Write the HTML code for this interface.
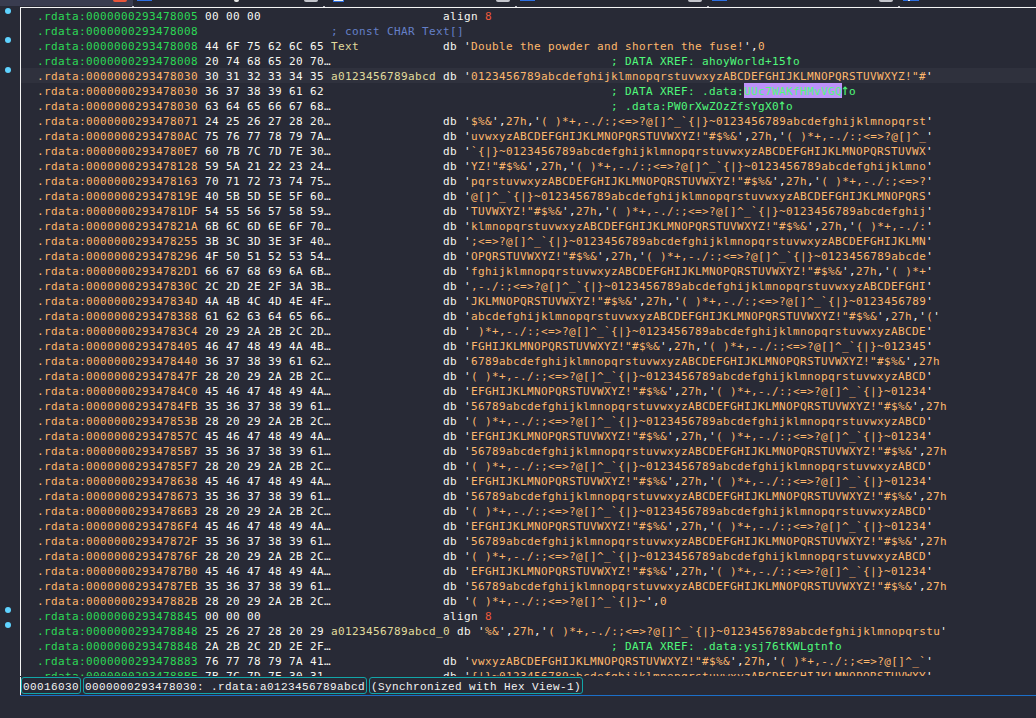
<!DOCTYPE html>
<html><head><meta charset="utf-8"><title>IDA View-A</title>
<style>
html,body{margin:0;padding:0;background:#282a36;overflow:hidden}
body{width:1036px;height:718px;position:relative;font-family:"DejaVu Sans Mono","Liberation Mono",monospace}
#tabs{position:absolute;left:0;top:0;width:1036px;height:6px;background:#252732;overflow:hidden}
#tabs .act{position:absolute;left:0;top:0;width:133px;height:6px;background:#393c4f}
#tabs span{position:absolute;top:0;display:block}
#gutter{position:absolute;left:0;top:7px;width:20px;height:688px;background:#282a36}
.dot{position:absolute;left:5px;width:6px;height:6px;margin-top:-8px;border-radius:50%;background:#5fd3ff}
#view{position:absolute;left:20px;top:7px;width:1016px;height:669px;border-left:1px solid #f4f4f4;border-top:1px solid #f4f4f4;box-sizing:border-box;overflow:hidden}
#code{position:absolute;left:0;top:0;width:1015px}
.r{height:15px;line-height:17px;white-space:pre;font-size:11px;color:#f8f8f2;padding-left:16px;letter-spacing:0.378px}
.r.cur{background:#2f313d}
.g{color:#2cd855}.o{color:#ffb469}
.r i{font-style:normal;color:#ffb86c}
.r b{font-weight:normal;color:#f0583a}
.r u{text-decoration:none;color:#6580c8}
.r s{text-decoration:none;color:#50fa7b}
.r em{font-style:normal;color:#e2dc9c}
.r mark{background:#bd93f9;color:#50fa7b;display:inline-block;height:15px;line-height:17px;vertical-align:top}
#status{position:absolute;left:0;top:677px;width:1036px;height:17px;font-family:"Liberation Mono","DejaVu Sans Mono",monospace;font-size:11px;letter-spacing:0.4px;color:#f4f4f4}
#status .cell{position:absolute;top:0;height:17px;line-height:18px;border:1px solid #12a5a8;border-radius:3px;white-space:pre;text-align:center;box-sizing:border-box}
#blueline{position:absolute;left:20px;top:695px;width:1016px;height:1px;background:#1c6fc9}
#vline{position:absolute;left:20px;top:677px;width:1px;height:18px;background:#f4f4f4}
.bump{position:absolute;top:6px;width:2px;height:1px;background:#b9bac2}
.up{display:inline-block;transform:scale(1.25,1.45);transform-origin:50% 12.3px}

</style></head><body>
<div id="tabs"><div class="act"></div>
<span style="left:113px;width:14px;height:2px;background:#e8553a;border-radius:0 0 3px 3px"></span>
<span style="left:137px;width:15px;height:1px;background:#2f6fe0"></span>
<span style="left:234px;width:5px;height:2px;background:#e8e8e8;border-radius:0 0 2px 2px"></span>
<span style="left:304px;width:14px;height:2px;background:#c4c5cc;border-radius:0 0 3px 3px"></span>
<span style="left:333px;width:11px;height:2px;background:#f2f2f2;border:1px solid #2f6fe0;border-top:0;box-sizing:border-box"></span>
<span style="left:496px;width:14px;height:2px;background:#c4c5cc;border-radius:0 0 3px 3px"></span>
<span style="left:520px;width:15px;height:1px;background:#2f6fe0"></span>
<span style="left:688px;width:14px;height:2px;background:#c4c5cc;border-radius:0 0 3px 3px"></span>
<span style="left:712px;width:15px;height:1px;background:#2f6fe0"></span>
<span style="left:879px;width:14px;height:2px;background:#c4c5cc;border-radius:0 0 3px 3px"></span>
<span style="left:903px;width:16px;height:1px;background:#2f6fe0"></span><span style="left:908px;width:2px;height:1px;background:#e8eefc"></span>
</div>
<span class="bump" style="left:132px"></span><span class="bump" style="left:323px"></span><span class="bump" style="left:515px"></span><span class="bump" style="left:707px"></span><span class="bump" style="left:898px"></span>

<div id="gutter"><span class="dot" style="top:9px"></span><span class="dot" style="top:38px"></span><span class="dot" style="top:68px"></span><span class="dot" style="top:608px"></span><span class="dot" style="top:623px"></span></div>
<div id="view"><div id="code">
<div class="r "><span class="g">.rdata:0000000293478005</span> 00 00 00                          align <b>8</b></div>
<div class="r "><span class="g">.rdata:0000000293478008</span>                   <u>; const CHAR Text[]</u></div>
<div class="r "><span class="g">.rdata:0000000293478008</span> 44 6F 75 62 6C 65 <em>Text</em>            db '<i>Double the powder and shorten the fuse!</i>',<i>0</i></div>
<div class="r "><span class="g">.rdata:0000000293478008</span> 20 74 68 65 20 70…                                        <s>; DATA XREF: ahoyWorld+15<span class=up>↑</span>o</s></div>
<div class="r cur"><span class="o">.rdata:0000000293478030</span> 30 31 32 33 34 35 <em>a0123456789abcd</em> db '<i>0123456789abcdefghijklmnopqrstuvwxyzABCDEFGHIJKLMNOPQRSTUVWXYZ!"#</i>'</div>
<div class="r "><span class="o">.rdata:0000000293478030</span> 36 37 38 39 61 62                                         <s>; DATA XREF: .data:<mark>UUc7WAKfHMvVGQ</mark><span class=up>↑</span>o</s></div>
<div class="r "><span class="o">.rdata:0000000293478030</span> 63 64 65 66 67 68…                                        <s>; .data:PW0rXwZOzZfsYgX0<span class=up>↑</span>o</s></div>
<div class="r "><span class="o">.rdata:0000000293478071</span> 24 25 26 27 28 20…                db '<i>$%&amp;</i>',<i>27h</i>,'<i>( )*+,-./:;&lt;=&gt;?@[]^_`{|}~0123456789abcdefghijklmnopqrst</i>'</div>
<div class="r "><span class="o">.rdata:00000002934780AC</span> 75 76 77 78 79 7A…                db '<i>uvwxyzABCDEFGHIJKLMNOPQRSTUVWXYZ!"#$%&amp;</i>',<i>27h</i>,'<i>( )*+,-./:;&lt;=&gt;?@[]^_</i>'</div>
<div class="r "><span class="o">.rdata:00000002934780E7</span> 60 7B 7C 7D 7E 30…                db '<i>`{|}~0123456789abcdefghijklmnopqrstuvwxyzABCDEFGHIJKLMNOPQRSTUVWX</i>'</div>
<div class="r "><span class="o">.rdata:0000000293478128</span> 59 5A 21 22 23 24…                db '<i>YZ!"#$%&amp;</i>',<i>27h</i>,'<i>( )*+,-./:;&lt;=&gt;?@[]^_`{|}~0123456789abcdefghijklmno</i>'</div>
<div class="r "><span class="o">.rdata:0000000293478163</span> 70 71 72 73 74 75…                db '<i>pqrstuvwxyzABCDEFGHIJKLMNOPQRSTUVWXYZ!"#$%&amp;</i>',<i>27h</i>,'<i>( )*+,-./:;&lt;=&gt;?</i>'</div>
<div class="r "><span class="o">.rdata:000000029347819E</span> 40 5B 5D 5E 5F 60…                db '<i>@[]^_`{|}~0123456789abcdefghijklmnopqrstuvwxyzABCDEFGHIJKLMNOPQRS</i>'</div>
<div class="r "><span class="o">.rdata:00000002934781DF</span> 54 55 56 57 58 59…                db '<i>TUVWXYZ!"#$%&amp;</i>',<i>27h</i>,'<i>( )*+,-./:;&lt;=&gt;?@[]^_`{|}~0123456789abcdefghij</i>'</div>
<div class="r "><span class="o">.rdata:000000029347821A</span> 6B 6C 6D 6E 6F 70…                db '<i>klmnopqrstuvwxyzABCDEFGHIJKLMNOPQRSTUVWXYZ!"#$%&amp;</i>',<i>27h</i>,'<i>( )*+,-./:</i>'</div>
<div class="r "><span class="o">.rdata:0000000293478255</span> 3B 3C 3D 3E 3F 40…                db '<i>;&lt;=&gt;?@[]^_`{|}~0123456789abcdefghijklmnopqrstuvwxyzABCDEFGHIJKLMN</i>'</div>
<div class="r "><span class="o">.rdata:0000000293478296</span> 4F 50 51 52 53 54…                db '<i>OPQRSTUVWXYZ!"#$%&amp;</i>',<i>27h</i>,'<i>( )*+,-./:;&lt;=&gt;?@[]^_`{|}~0123456789abcde</i>'</div>
<div class="r "><span class="o">.rdata:00000002934782D1</span> 66 67 68 69 6A 6B…                db '<i>fghijklmnopqrstuvwxyzABCDEFGHIJKLMNOPQRSTUVWXYZ!"#$%&amp;</i>',<i>27h</i>,'<i>( )*+</i>'</div>
<div class="r "><span class="o">.rdata:000000029347830C</span> 2C 2D 2E 2F 3A 3B…                db '<i>,-./:;&lt;=&gt;?@[]^_`{|}~0123456789abcdefghijklmnopqrstuvwxyzABCDEFGHI</i>'</div>
<div class="r "><span class="o">.rdata:000000029347834D</span> 4A 4B 4C 4D 4E 4F…                db '<i>JKLMNOPQRSTUVWXYZ!"#$%&amp;</i>',<i>27h</i>,'<i>( )*+,-./:;&lt;=&gt;?@[]^_`{|}~0123456789</i>'</div>
<div class="r "><span class="o">.rdata:0000000293478388</span> 61 62 63 64 65 66…                db '<i>abcdefghijklmnopqrstuvwxyzABCDEFGHIJKLMNOPQRSTUVWXYZ!"#$%&amp;</i>',<i>27h</i>,'<i>(</i>'</div>
<div class="r "><span class="o">.rdata:00000002934783C4</span> 20 29 2A 2B 2C 2D…                db '<i> )*+,-./:;&lt;=&gt;?@[]^_`{|}~0123456789abcdefghijklmnopqrstuvwxyzABCDE</i>'</div>
<div class="r "><span class="o">.rdata:0000000293478405</span> 46 47 48 49 4A 4B…                db '<i>FGHIJKLMNOPQRSTUVWXYZ!"#$%&amp;</i>',<i>27h</i>,'<i>( )*+,-./:;&lt;=&gt;?@[]^_`{|}~012345</i>'</div>
<div class="r "><span class="o">.rdata:0000000293478440</span> 36 37 38 39 61 62…                db '<i>6789abcdefghijklmnopqrstuvwxyzABCDEFGHIJKLMNOPQRSTUVWXYZ!"#$%&amp;</i>',<i>27h</i></div>
<div class="r "><span class="o">.rdata:000000029347847F</span> 28 20 29 2A 2B 2C…                db '<i>( )*+,-./:;&lt;=&gt;?@[]^_`{|}~0123456789abcdefghijklmnopqrstuvwxyzABCD</i>'</div>
<div class="r "><span class="o">.rdata:00000002934784C0</span> 45 46 47 48 49 4A…                db '<i>EFGHIJKLMNOPQRSTUVWXYZ!"#$%&amp;</i>',<i>27h</i>,'<i>( )*+,-./:;&lt;=&gt;?@[]^_`{|}~01234</i>'</div>
<div class="r "><span class="o">.rdata:00000002934784FB</span> 35 36 37 38 39 61…                db '<i>56789abcdefghijklmnopqrstuvwxyzABCDEFGHIJKLMNOPQRSTUVWXYZ!"#$%&amp;</i>',<i>27h</i></div>
<div class="r "><span class="o">.rdata:000000029347853B</span> 28 20 29 2A 2B 2C…                db '<i>( )*+,-./:;&lt;=&gt;?@[]^_`{|}~0123456789abcdefghijklmnopqrstuvwxyzABCD</i>'</div>
<div class="r "><span class="o">.rdata:000000029347857C</span> 45 46 47 48 49 4A…                db '<i>EFGHIJKLMNOPQRSTUVWXYZ!"#$%&amp;</i>',<i>27h</i>,'<i>( )*+,-./:;&lt;=&gt;?@[]^_`{|}~01234</i>'</div>
<div class="r "><span class="o">.rdata:00000002934785B7</span> 35 36 37 38 39 61…                db '<i>56789abcdefghijklmnopqrstuvwxyzABCDEFGHIJKLMNOPQRSTUVWXYZ!"#$%&amp;</i>',<i>27h</i></div>
<div class="r "><span class="o">.rdata:00000002934785F7</span> 28 20 29 2A 2B 2C…                db '<i>( )*+,-./:;&lt;=&gt;?@[]^_`{|}~0123456789abcdefghijklmnopqrstuvwxyzABCD</i>'</div>
<div class="r "><span class="o">.rdata:0000000293478638</span> 45 46 47 48 49 4A…                db '<i>EFGHIJKLMNOPQRSTUVWXYZ!"#$%&amp;</i>',<i>27h</i>,'<i>( )*+,-./:;&lt;=&gt;?@[]^_`{|}~01234</i>'</div>
<div class="r "><span class="o">.rdata:0000000293478673</span> 35 36 37 38 39 61…                db '<i>56789abcdefghijklmnopqrstuvwxyzABCDEFGHIJKLMNOPQRSTUVWXYZ!"#$%&amp;</i>',<i>27h</i></div>
<div class="r "><span class="o">.rdata:00000002934786B3</span> 28 20 29 2A 2B 2C…                db '<i>( )*+,-./:;&lt;=&gt;?@[]^_`{|}~0123456789abcdefghijklmnopqrstuvwxyzABCD</i>'</div>
<div class="r "><span class="o">.rdata:00000002934786F4</span> 45 46 47 48 49 4A…                db '<i>EFGHIJKLMNOPQRSTUVWXYZ!"#$%&amp;</i>',<i>27h</i>,'<i>( )*+,-./:;&lt;=&gt;?@[]^_`{|}~01234</i>'</div>
<div class="r "><span class="o">.rdata:000000029347872F</span> 35 36 37 38 39 61…                db '<i>56789abcdefghijklmnopqrstuvwxyzABCDEFGHIJKLMNOPQRSTUVWXYZ!"#$%&amp;</i>',<i>27h</i></div>
<div class="r "><span class="o">.rdata:000000029347876F</span> 28 20 29 2A 2B 2C…                db '<i>( )*+,-./:;&lt;=&gt;?@[]^_`{|}~0123456789abcdefghijklmnopqrstuvwxyzABCD</i>'</div>
<div class="r "><span class="o">.rdata:00000002934787B0</span> 45 46 47 48 49 4A…                db '<i>EFGHIJKLMNOPQRSTUVWXYZ!"#$%&amp;</i>',<i>27h</i>,'<i>( )*+,-./:;&lt;=&gt;?@[]^_`{|}~01234</i>'</div>
<div class="r "><span class="o">.rdata:00000002934787EB</span> 35 36 37 38 39 61…                db '<i>56789abcdefghijklmnopqrstuvwxyzABCDEFGHIJKLMNOPQRSTUVWXYZ!"#$%&amp;</i>',<i>27h</i></div>
<div class="r "><span class="o">.rdata:000000029347882B</span> 28 20 29 2A 2B 2C…                db '<i>( )*+,-./:;&lt;=&gt;?@[]^_`{|}~</i>',<i>0</i></div>
<div class="r "><span class="g">.rdata:0000000293478845</span> 00 00 00                          align <b>8</b></div>
<div class="r "><span class="g">.rdata:0000000293478848</span> 25 26 27 28 20 29 <em>a0123456789abcd_0</em> db '<i>%&amp;</i>',<i>27h</i>,'<i>( )*+,-./:;&lt;=&gt;?@[]^_`{|}~0123456789abcdefghijklmnopqrstu</i>'</div>
<div class="r "><span class="g">.rdata:0000000293478848</span> 2A 2B 2C 2D 2E 2F…                                        <s>; DATA XREF: .data:ysj76tKWLgtn<span class=up>↑</span>o</s></div>
<div class="r "><span class="g">.rdata:0000000293478883</span> 76 77 78 79 7A 41…                db '<i>vwxyzABCDEFGHIJKLMNOPQRSTUVWXYZ!"#$%&amp;</i>',<i>27h</i>,'<i>( )*+,-./:;&lt;=&gt;?@[]^_`</i>'</div>
<div class="r "><span class="g">.rdata:00000002934788BE</span> 7B 7C 7D 7E 30 31…                db '<i>{|}~0123456789abcdefghijklmnopqrstuvwxyzABCDEFGHIJKLMNOPQRSTUVWXY</i>'</div>
</div></div>
<div id="status"><span class="cell" style="left:21px;width:60px">00016030</span><span class="cell" style="left:83px;width:284px">0000000293478030: .rdata:a0123456789abcd</span><span class="cell" style="left:369px;width:214px">(Synchronized with Hex View-1)</span></div>
<div id="blueline"></div><div id="vline"></div>
</body></html>
